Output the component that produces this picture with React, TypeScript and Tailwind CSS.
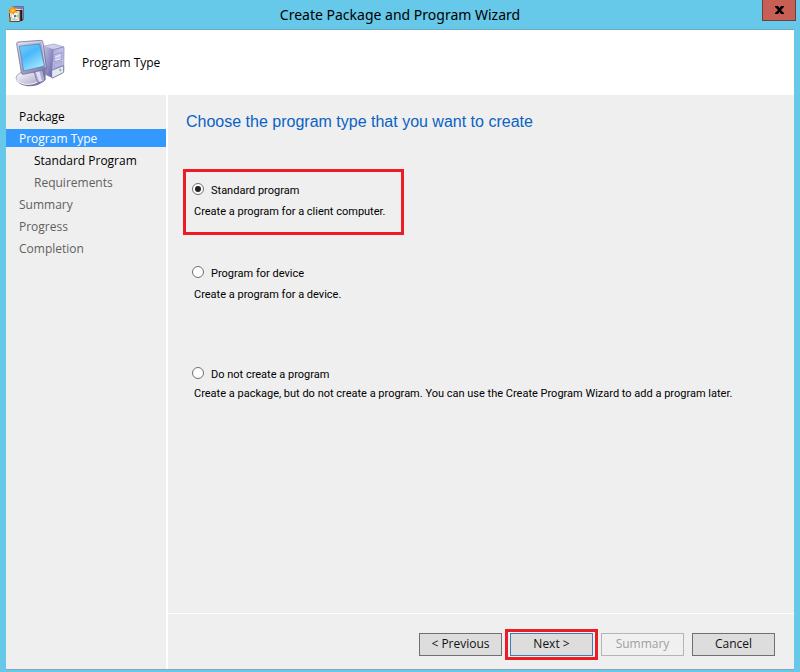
import React, { useState } from "react";
import clsx from "clsx";

const steps = [
  { label: "Package", state: "done" },
  { label: "Program Type", state: "current" },
  { label: "Standard Program", state: "done", nested: true },
  { label: "Requirements", state: "todo", nested: true },
  { label: "Summary", state: "todo" },
  { label: "Progress", state: "todo" },
  { label: "Completion", state: "todo" },
];

const programTypes = [
  {
    id: "standard",
    label: "Standard program",
    description: "Create a program for a client computer.",
    box: "h-[66px] w-[221px] border-3 border-[#ed1c24] pt-[10px] pl-[6px]",
    gap: "mt-2",
  },
  {
    id: "device",
    label: "Program for device",
    description: "Create a program for a device.",
    box: "mt-[30px] pl-[9px]",
    gap: "mt-2",
  },
  {
    id: "none",
    label: "Do not create a program",
    description:
      "Create a package, but do not create a program. You can use the Create Program Wizard to add a program later.",
    box: "mt-[63px] pl-[9px]",
    gap: "mt-[6px]",
  },
];

function PackageIcon() {
  return (
    <svg width="16" height="16" viewBox="0 0 16 16" aria-hidden="true">
      <path d="M4.500 0.500h11v13h-11z" fill="#e4e0f2" stroke="#6f6a9c" />
      <path d="M5 1h10v2H5z" fill="#8480b4" />
      <path d="M12 4l2.500-.5v11.500H12z" fill="#1f1a17" />
      <path d="M1.500 4.500h10.500v11H1.500z" fill="#ece6da" stroke="#5c4a3a" />
      <path d="M1 11h2v4.500H1z" fill="#a9793f" />
      <circle cx="7" cy="10" r="4" fill="#f1f5f6" stroke="#a9b3b7" strokeWidth="0.600" />
      <path d="M7 10l3.800-1.500-.6 3z" fill="#8fd08c" />
      <path d="M7 10l-2 3.500 2.500.3z" fill="#9cc5ee" />
      <circle cx="7" cy="10" r="1" fill="#444" />
      <path d="M5 0l1.200 2.300L9.500 2 7.600 4.200 10 6.500 6.800 6.400 5.500 9 3.600 6.700 0 7.500 1.900 4.600 0 2l3.300.3z" fill="#f7981c" />
      <circle cx="4.800" cy="4.500" r="1.600" fill="#ffc845" />
    </svg>
  );
}

function ComputerIcon() {
  return (
    <svg width="64" height="58" viewBox="0 0 192 174" aria-hidden="true">
      <defs>
        <linearGradient id="screen" x1="0" y1="0" x2="0.6" y2="1">
          <stop offset="0" stopColor="#7ccdf6" />
          <stop offset="0.45" stopColor="#4ab8fa" />
          <stop offset="1" stopColor="#a4e6ff" />
        </linearGradient>
        <linearGradient id="front" x1="0" y1="0" x2="1" y2="1">
          <stop offset="0" stopColor="#a9a9dc" />
          <stop offset="1" stopColor="#dcdcf2" />
        </linearGradient>
        <linearGradient id="side" x1="0" y1="0" x2="1" y2="1">
          <stop offset="0" stopColor="#c4c3e5" />
          <stop offset="1" stopColor="#6260a6" />
        </linearGradient>
        <linearGradient id="frame" x1="0" y1="0" x2="1" y2="1">
          <stop offset="0" stopColor="#d8d8e6" />
          <stop offset="1" stopColor="#7575a8" />
        </linearGradient>
        <linearGradient id="base" x1="0" y1="0" x2="1" y2="1">
          <stop offset="0" stopColor="#ffffff" />
          <stop offset="1" stopColor="#a5a5c8" />
        </linearGradient>
      </defs>
      <path d="M108 36l30-6 30 9-33 9z" fill="#cfcfec" stroke="#9b9bca" strokeWidth="2" />
      <path d="M106 36l30 10-2 86-28-12z" fill="url(#side)" />
      <path d="M135 47l31-8q2 0 2 2l-1 70q0 3-3 5l-30 15q-3 1-3-2z" fill="url(#front)" stroke="#7c7ab5" strokeWidth="2" />
      <path d="M138 62l24-7v21l-24 8z" fill="#c3c3e8" stroke="#8885bf" strokeWidth="2" />
      <path d="M142 69l15-5M142 79l15-5" stroke="#f3f3fc" strokeWidth="3" />
      <path d="M138 90l24-9v14l-24 9z" fill="#b5b5e0" stroke="#9a98cb" strokeWidth="2" />
      <path d="M131 109l36-14v17q0 3-3 5l-30 15q-3 1-3-2z" fill="#e6e6f5" stroke="#5b5894" strokeWidth="2" />
      <ellipse cx="157" cy="108" rx="3" ry="4" fill="#55dd33" />
      <path d="M45 113q-22 6-20 20 4 20 34 24 30 1 44-12l10-8-1-28z" fill="#77749f" />
      <ellipse cx="60" cy="132" rx="36" ry="20" fill="url(#base)" stroke="#9593b5" strokeWidth="2" />
      <path d="M27 137q9 14 33 14 25-1 33-12" fill="none" stroke="#f8f8fd" strokeWidth="3" />
      <path d="M76 106l26-5 8 33q1 8-6 10l-11 1q-6-1-8-9z" fill="#a9a8d2" stroke="#6e6c9c" strokeWidth="2" />
      <path d="M82 110l11-3 9 34-9 2z" fill="#dedef1" />
      <path d="M26 30q-1-5 4-6l67-5q7-1 8 6l10 76q1 5-4 6l-64 14q-6 1-7-5z" fill="url(#frame)" stroke="#66658d" strokeWidth="2" />
      <path d="M30 29l68-6q4-1 4 4l10 73" fill="none" stroke="#efeff7" strokeWidth="2" />
      <path d="M34 37l61-7 14 66-62 15z" fill="url(#screen)" stroke="#4a7fb8" strokeWidth="2" />
    </svg>
  );
}

function WizardButton({ className, ...props }: React.ComponentProps<"button">) {
  return (
    <button
      type="button"
      className={clsx(
        "h-[23px] w-[83px] border text-[12px] leading-4",
        props.disabled
          ? "border-[#b5b5b5] bg-[#f0f0f0] text-[#a0a0a0]"
          : "bg-[#dddddd] text-[#111111]",
        className
      )}
      {...props}
    />
  );
}

export default function App() {
  const [selected, setSelected] = useState("standard");

  return (
    <div className="flex min-h-screen flex-col bg-[#67c9e9] px-[6px] pb-[2px] font-['Open_Sans','Noto_Sans',sans-serif] text-black">
      <div className="relative flex h-[29px] items-center justify-center">
        <div className="absolute top-[6px] left-[2px]">
          <PackageIcon />
        </div>
        <h1 className="font-['Noto_Sans',sans-serif] text-[14px] leading-5">Create Package and Program Wizard</h1>
        <button
          type="button"
          aria-label="Close"
          className="absolute top-0 right-[-2px] flex h-[21px] w-[34px] items-center justify-center border border-t-0 border-[#6b3f3c] bg-[#c75f55]"
        >
          <svg width="9" height="8" viewBox="0 0 9 8" aria-hidden="true">
            <path d="M0 0h3l1.500 2L6 0h3v1L6 4l3 3v1H6L4.500 6 3 8H0V7l3-3-3-3z" fill="#000" />
          </svg>
        </button>
      </div>

      <div className="flex grow flex-col border-y border-t-[#6fa9c0] border-b-[#7fa9b8] bg-[#efefef]">
        <header className="flex h-[65px] items-center bg-white pl-[2px]">
          <ComputerIcon />
          <h2 className="ml-[10px] text-[12px] leading-4">Program Type</h2>
        </header>

        <div className="flex grow">
          <nav className="w-[160px] shrink-0 pt-3">
            <ul className="flex flex-col gap-1">
              {steps.map((step) => (
                <li
                  key={step.label}
                  aria-current={step.state === "current" ? "step" : undefined}
                  className={clsx(
                    "h-[18px] text-[12px] leading-5",
                    step.nested ? "pl-7" : "pl-[13px]",
                    step.state === "current" && "bg-[#3399ff] text-white",
                    step.state === "todo" && "text-[#5f5f5f]"
                  )}
                >
                  {step.label}
                </li>
              ))}
            </ul>
          </nav>

          <main className="flex grow flex-col border-l-2 border-white">
            <div className="grow px-[15px] pt-[17px] font-['Roboto','Liberation_Sans',sans-serif]">
              <h3 className="pl-[3px] font-['Liberation_Sans',Arial,sans-serif] text-[16px] leading-5 text-[#0a62c4]">
                Choose the program type that you want to create
              </h3>
              <div className="mt-[37px]">
                {programTypes.map((type) => (
                  <div key={type.id} className={type.box}>
                    <div className="flex h-[14px] items-start">
                      <input
                        type="radio"
                        id={type.id}
                        name="program-type"
                        checked={selected === type.id}
                        onChange={() => setSelected(type.id)}
                        className="mt-px grid h-3 w-3 appearance-none place-items-center rounded-full border border-[#707070] bg-white before:h-[6px] before:w-[6px] before:rounded-full checked:before:bg-[#222222]"
                      />
                      <label htmlFor={type.id} className="ml-[7px] text-[11px] leading-[18px]">
                        {type.label}
                      </label>
                    </div>
                    <p className={clsx("pl-[2px] text-[11px] leading-4", type.gap)}>{type.description}</p>
                  </div>
                ))}
              </div>
            </div>

            <footer className="flex h-14 items-center justify-end gap-2 border-t border-white pt-[5px] pr-[19px]">
              <WizardButton className="border-[#707070]">&lt; Previous</WizardButton>
              <div className="mx-[-5px] flex border-3 border-[#ed1c24] px-[2px] py-px">
                <WizardButton className="border-[#3c7fb1]">Next &gt;</WizardButton>
              </div>
              <WizardButton disabled>Summary</WizardButton>
              <WizardButton className="border-[#707070]">Cancel</WizardButton>
            </footer>
          </main>
        </div>
      </div>
    </div>
  );
}
